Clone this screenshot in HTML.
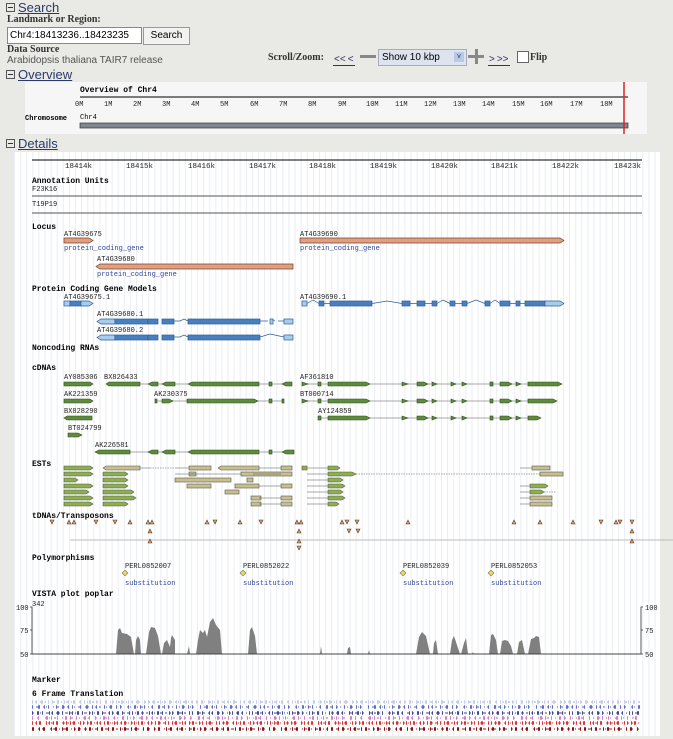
<!DOCTYPE html>
<html><head><meta charset="utf-8"><style>
body{margin:0;width:673px;height:739px;background:#e9e9e5;font-family:"Liberation Sans",sans-serif;position:relative;overflow:hidden}
.a{position:absolute;white-space:nowrap}
.h{font-size:13px;color:#2a3b6a;display:flex;align-items:center}
.h u{text-decoration:underline}
.box{display:inline-block;width:7px;height:7px;border:1px solid #555;margin-right:3px;position:relative;flex:none}
.box:after{content:"";position:absolute;left:1px;top:3px;width:5px;height:1px;background:#333}
.s{font-size:10px;color:#333}
.b{font-size:10px;color:#333;font-weight:bold;font-family:"Liberation Serif",serif}
.ar{display:inline-block;border-bottom:1px solid #336;font-size:10px;color:#336;padding:0 1px;line-height:11px}
</style></head><body>
<div class="a h" style="left:6px;top:0px"><span class="box"></span><u>Search</u></div>
<div class="a b" style="left:7px;top:14px">Landmark or Region:</div>
<div class="a" style="left:7px;top:27px;width:131px;height:15px;background:#fff;border:1px solid #888;font-size:10px;line-height:15px;padding-left:2px">Chr4:18413236..18423235</div>
<div class="a" style="left:143px;top:27px;width:45px;height:16px;background:#f2f2f0;border:1px solid #999;font-size:10px;line-height:16px;text-align:center">Search</div>
<div class="a b" style="left:7px;top:44px">Data Source</div>
<div class="a s" style="left:7px;top:55px;color:#555">Arabidopsis thaliana TAIR7 release</div>
<div class="a b" style="left:268px;top:52px">Scroll/Zoom:</div>
<div class="a" style="left:333px;top:49px"><span class="ar">&lt;&lt;</span><span class="ar">&lt;</span></div>
<div class="a" style="left:360px;top:55px;width:16px;height:3px;background:#888"></div>
<div class="a" style="left:378px;top:49px;width:84px;height:15px;background:#dde4ee;border:1px solid #aab;font-size:10px;line-height:15px;padding-left:3px">Show 10 kbp<span style="position:absolute;right:2px;top:2px;width:10px;height:10px;background:#b8c8e8;font-size:7px;line-height:10px;text-align:center;color:#335">v</span></div>
<div class="a" style="left:468px;top:55px;width:16px;height:3px;background:#888"></div><div class="a" style="left:475px;top:49px;width:3px;height:15px;background:#888"></div>
<div class="a" style="left:488px;top:49px"><span class="ar">&gt;</span><span class="ar">&gt;&gt;</span></div>
<div class="a" style="left:517px;top:51px;width:10px;height:10px;border:1px solid #666;background:#fff"></div>
<div class="a b" style="left:530px;top:52px">Flip</div>
<div class="a h" style="left:6px;top:67px"><span class="box"></span><u>Overview</u></div>
<div class="a h" style="left:6px;top:136px"><span class="box"></span><u>Details</u></div>

<svg class="a" style="left:0;top:0" width="673" height="739" font-family="Liberation Mono,monospace">
<defs>
<pattern id="g" x="14" y="0" width="6.1" height="10" patternUnits="userSpaceOnUse"><rect width="6.1" height="10" fill="#fff"/><rect width="1" height="10" fill="#eaeef4"/></pattern>
</defs>
<rect x="25" y="82" width="622" height="52" fill="#f6f6f6"/>
<text x="80" y="92" font-size="8" font-weight="bold">Overview of Chr4</text>
<line x1="80" y1="97" x2="628" y2="97" stroke="#000"/>
<g font-size="7" fill="#222">
<text x="75" y="106">0M</text><text x="104" y="106">1M</text><text x="133" y="106">2M</text><text x="162" y="106">3M</text><text x="191" y="106">4M</text><text x="220" y="106">5M</text><text x="250" y="106">6M</text><text x="279" y="106">7M</text><text x="308" y="106">8M</text><text x="338" y="106">9M</text><text x="366" y="106">10M</text><text x="395" y="106">11M</text><text x="424" y="106">12M</text><text x="453" y="106">13M</text><text x="482" y="106">14M</text><text x="512" y="106">15M</text><text x="540" y="106">16M</text><text x="570" y="106">17M</text><text x="600" y="106">18M</text></g>
<text x="25" y="120" font-size="7" font-weight="bold">Chromosome</text><text x="80" y="119" font-size="7">Chr4</text>
<rect x="80" y="123" width="548" height="5" fill="#7f8690" stroke="#333" stroke-width=".7"/>
<line x1="624" y1="82" x2="624" y2="134" stroke="#d22" stroke-width="1.5"/>
<rect x="14" y="152" width="646" height="584" fill="url(#g)"/>
<line x1="32" y1="160" x2="642" y2="160" stroke="#000"/>
<g font-size="7.5" fill="#222"><text x="65" y="168">18414k</text><text x="126" y="168">18415k</text><text x="188" y="168">18416k</text><text x="249" y="168">18417k</text><text x="309" y="168">18418k</text><text x="370" y="168">18419k</text><text x="431" y="168">18420k</text><text x="491" y="168">18421k</text><text x="552" y="168">18422k</text><text x="614" y="168">18423k</text></g>
<g font-size="8" font-weight="bold">
<text x="32" y="183">Annotation Units</text><text x="32" y="229">Locus</text><text x="32" y="291">Protein Coding Gene Models</text><text x="32" y="350">Noncoding RNAs</text><text x="32" y="370">cDNAs</text><text x="32" y="466">ESTs</text><text x="32" y="518">tDNAs/Transposons</text><text x="32" y="560">Polymorphisms</text><text x="32" y="596">VISTA plot poplar</text><text x="32" y="682">Marker</text><text x="32" y="696">6 Frame Translation</text></g>
<g font-size="7" fill="#222">
<text x="32" y="191">F23K16</text><line x1="32" y1="196" x2="642" y2="196" stroke="#555"/>
<text x="32" y="206">T19P19</text><line x1="32" y1="213" x2="642" y2="213" stroke="#555"/>
<text x="64" y="236">AT4G39675</text><text x="97" y="261">AT4G39680</text><text x="300" y="236">AT4G39690</text>
<text x="64" y="299">AT4G39675.1</text><text x="97" y="316">AT4G39680.1</text><text x="97" y="332">AT4G39680.2</text><text x="300" y="299">AT4G39690.1</text>
<text x="64" y="379">AY085306</text><text x="104" y="379">BX826433</text><text x="300" y="379">AF361810</text>
<text x="64" y="396">AK221359</text><text x="154" y="396">AK230375</text><text x="300" y="396">BT000714</text>
<text x="64" y="413">BX828290</text><text x="318" y="413">AY124859</text><text x="68" y="430">BT024799</text><text x="95" y="447">AK226581</text>
<text x="125" y="568">PERL0852007</text><text x="243" y="568">PERL0852022</text><text x="403" y="568">PERL0852039</text><text x="491" y="568">PERL0852053</text>
<text x="32" y="606">342</text><text x="16" y="610">100</text><text x="20" y="633">75</text><text x="20" y="657">50</text><text x="645" y="610">100</text><text x="645" y="633">75</text><text x="645" y="657">50</text>
</g>
<g font-size="7" fill="#33479a"><text x="64" y="250">protein_coding_gene</text><text x="97" y="276">protein_coding_gene</text><text x="300" y="250">protein_coding_gene</text>
<text x="125" y="585">substitution</text><text x="243" y="585">substitution</text><text x="403" y="585">substitution</text><text x="491" y="585">substitution</text></g>
<g fill="#e0a080" stroke="#7a4030" stroke-width=".7"><path d="M64 238H89L93 240.5L89 243H64Z"/><path d="M100 264H293V269H100L96 266.5Z"/><path d="M300 238H560L564 240.5L560 243H300Z"/></g>
<g stroke="#2e5e99" stroke-width=".7">
<rect x="64" y="301" width="6" height="5" fill="#a8ccec"/><rect x="70" y="301" width="11" height="5" fill="#4a7fbf"/><path d="M81 301H89L93 303.5L89 306H81Z" fill="#a8ccec"/>
<g fill="none"><path d="M180 321L184 319L188 321M174 321H180M188 321H204M260 321H268M270 321L272 319L275 321M278 321H284"/><path d="M180 337L184 335L188 337M174 337H180M188 337H204M260 337L270 334L284 337"/></g>
<path d="M101 319H115V324H101L97 321.5Z" fill="#a8ccec"/><rect x="115" y="319" width="33" height="5" fill="#4a7fbf"/><rect x="148" y="319" width="10" height="5" fill="#4a7fbf"/><rect x="162" y="319" width="12" height="5" fill="#4a7fbf"/><rect x="188" y="319" width="72" height="5" fill="#4a7fbf"/><rect x="270" y="319" width="3" height="5" fill="#a8ccec"/><rect x="284" y="319" width="9" height="5" fill="#a8ccec"/>
<path d="M101 335H115V340H101L97 337.5Z" fill="#a8ccec"/><rect x="115" y="335" width="33" height="5" fill="#4a7fbf"/><rect x="148" y="335" width="10" height="5" fill="#4a7fbf"/><rect x="162" y="335" width="12" height="5" fill="#4a7fbf"/><rect x="188" y="335" width="72" height="5" fill="#4a7fbf"/><rect x="284" y="335" width="9" height="5" fill="#a8ccec"/>
<path d="M307 303.5L313 300L319 303.5M324 303.5H330M372 303.5L387 301L402 303.5M410 303.5H417M425 303.5H432M437 303.5L443 300L450 303.5M455 303.5H462M467 303.5L476 300L485 303.5M490 303.5L495 300L500 303.5M510 303.5H516M520 303.5H525" fill="none"/>
<rect x="302" y="301" width="5" height="5" fill="#a8ccec"/><g fill="#4a7fbf"><rect x="319" y="301" width="5" height="5"/><rect x="330" y="301" width="42" height="5"/><rect x="402" y="301" width="8" height="5"/><rect x="417" y="301" width="8" height="5"/><rect x="432" y="301" width="5" height="5"/><rect x="450" y="301" width="5" height="5"/><rect x="462" y="301" width="5" height="5"/><rect x="485" y="301" width="5" height="5"/><rect x="500" y="301" width="10" height="5"/><rect x="516" y="301" width="4" height="5"/><rect x="525" y="301" width="20" height="5"/></g><path d="M545 301H560L564 303.5L560 306H545Z" fill="#a8ccec"/>
</g>
<g fill="#5e8c3c" stroke="#2e4e1e" stroke-width=".6">
<g stroke="#555" fill="none"><path d="M140 384H292M302 384H562M155 401H283M302 401H555M318 418H540M95 452H294"/></g>
<path d="M64 382H90L93 384L90 386H64Z"/><path d="M109 382H140V386H109L106 384Z"/><path d="M152 382H158V386H152L148 384Z"/><path d="M166 382H175V386H166L162 384Z"/><path d="M192 382H259V386H192L188 384Z"/><rect x="269" y="382" width="3" height="4"/><path d="M286 382H292V386H286L282 384Z"/>
<path d="M302 382L308 384L302 386Z"/><rect x="318" y="382" width="3" height="4"/><path d="M328 382H366L370 384L366 386H328Z"/><path d="M402 382L408 384L402 386Z"/><path d="M417 382H424L428 384L424 386H417Z"/><path d="M432 382L437 384L432 386Z"/><path d="M451 382L456 384L451 386Z"/><path d="M462 382L467 384L462 386Z"/><rect x="490" y="382" width="3" height="4"/><path d="M500 382H508L512 384L508 386H500Z"/><path d="M516 382L521 384L516 386Z"/><path d="M528 382H558L562 384L558 386H528Z"/>
<path d="M64 399H90L93 401L90 403H64Z"/><rect x="155" y="399" width="2" height="4"/><path d="M162 399H169L173 401L169 403H162Z"/><path d="M187 399H254L258 401L254 403H187Z"/><rect x="269" y="399" width="3" height="4"/><rect x="282" y="399" width="2" height="4"/>
<path d="M302 399L308 401L302 403Z"/><rect x="318" y="399" width="3" height="4"/><path d="M328 399H366L370 401L366 403H328Z"/><path d="M402 399L408 401L402 403Z"/><path d="M417 399H424L428 401L424 403H417Z"/><path d="M432 399L437 401L432 403Z"/><path d="M451 399L456 401L451 403Z"/><path d="M462 399L467 401L462 403Z"/><rect x="490" y="399" width="3" height="4"/><path d="M500 399H508L512 401L508 403H500Z"/><path d="M516 399L521 401L516 403Z"/><path d="M528 399H553L557 401L553 403H528Z"/>
<path d="M67 416H92V420H67L64 418Z"/><rect x="318" y="416" width="3" height="4"/><path d="M328 416H366L370 418L366 420H328Z"/><path d="M402 416L408 418L402 420Z"/><path d="M417 416H424L428 418L424 420H417Z"/><path d="M432 416L437 418L432 420Z"/><path d="M451 416L456 418L451 420Z"/><path d="M462 416L467 418L462 420Z"/><rect x="490" y="416" width="3" height="4"/><path d="M500 416H508L512 418L508 420H500Z"/><path d="M516 416L521 418L516 420Z"/><path d="M528 416H537L541 418L537 420H528Z"/>
<path d="M68 433H78L82 435L78 437H68Z"/>
<path d="M99 450H130V454H99L95 452Z"/><path d="M152 450H158V454H152L148 452Z"/><path d="M166 450H175V454H166L162 452Z"/><path d="M192 450H259V454H192L188 452Z"/><rect x="269" y="450" width="3" height="4"/><path d="M286 450H294V454H286L282 452Z"/>
</g>
<g stroke="#555" stroke-width=".6" fill="#8cb04c">
<path d="M64 466H90L93 468L90 470H64Z"/><path d="M64 472H90L93 474L90 476H64Z"/><path d="M64 478H75L78 480L75 482H64Z"/><path d="M64 484H90L93 486L90 488H64Z"/><path d="M64 490H86L89 492L86 494H64Z"/><path d="M64 496H90L93 498L90 500H64Z"/><path d="M64 502H90L93 504L90 506H64Z"/>
<path d="M106 466H140V470H106L103 468Z" fill="#c8c08c"/><path d="M103 472H125L128 474L125 476H103Z"/><path d="M103 478H125L128 480L125 482H103Z"/><path d="M103 484H125L128 486L125 488H103Z"/><path d="M103 490H131L134 492L131 494H103Z"/><path d="M103 496H133L136 498L133 500H103Z"/><path d="M103 502H125L128 504L125 506H103Z"/>
<g fill="#c8c08c"><rect x="189" y="466" width="22" height="4"/><path d="M221 466H259V470H221L218 468Z"/><rect x="281" y="466" width="11" height="4"/><rect x="189" y="472" width="7" height="4"/><rect x="241" y="472" width="51" height="4"/><rect x="175" y="478" width="56" height="4"/><rect x="247" y="478" width="6" height="4"/><rect x="187" y="484" width="24" height="4"/><rect x="235" y="484" width="24" height="4"/><rect x="281" y="484" width="11" height="4"/><rect x="225" y="490" width="14" height="4"/><rect x="251" y="496" width="10" height="4"/><rect x="281" y="496" width="11" height="4"/><rect x="251" y="502" width="10" height="4"/><rect x="281" y="502" width="11" height="4"/>
<rect x="532" y="466" width="18" height="4"/><rect x="540" y="472" width="23" height="4"/><rect x="530" y="496" width="22" height="4"/><rect x="530" y="502" width="22" height="4"/></g>
<g><path d="M302 466H307V470H302Z"/><path d="M328 466H337L340 468L337 470H328Z"/><path d="M328 472H352L356 474L352 476H328Z"/><path d="M328 478H340L343 480L340 482H328Z"/><path d="M328 484H342L345 486L342 488H328Z"/><path d="M328 490H340L343 492L340 494H328Z"/><path d="M328 496H342L345 498L342 500H328Z"/><path d="M328 502H336L339 504L336 506H328Z"/><path d="M530 484H545L548 486L545 488H530Z"/><path d="M530 490H541L544 492L541 494H530Z"/></g>
<g fill="none"><path d="M140 468H150M175 468H189M259 468H281M175 474H241M253 474H281M259 486H281M259 498H281M259 504H281M307 468H328M307 474H328M307 480H328M307 486H328M307 492H328M307 498H328M307 504H328M520 468H532M520 486H530M520 492H530M520 498H530M520 504H530"/><path d="M150 468H175M356 474H540M544 492H556" stroke-dasharray="1.5 1"/></g>
</g>
<line x1="70" y1="540" x2="673" y2="540" stroke="#bbb"/>
<g fill="#d4a070" stroke="#5a3a20" stroke-width=".6">
<path d="M50 520h4l-2 4z"/><path d="M67 524h4l-2-4z"/><path d="M72 524h4l-2-4z"/><path d="M94 520h4l-2 4z"/><path d="M113 520h4l-2 4z"/><path d="M128 524h4l-2-4z"/><path d="M146 524h4l-2-4z"/><path d="M150 524h4l-2-4z"/><path d="M148 533h4l-2-4z"/><path d="M148 543h4l-2-4z"/>
<path d="M205 524h4l-2-4z"/><path d="M213 520h4l-2 4z"/><path d="M238 524h4l-2-4z"/><path d="M259 520h4l-2 4z"/><path d="M295 524h4l-2-4z"/><path d="M299 524h4l-2-4z"/><path d="M297 533h4l-2-4z"/><path d="M297 543h4l-2-4z"/><path d="M297 546h4l-2 4z"/>
<path d="M340 524h4l-2-4z"/><path d="M345 520h4l-2 4z"/><path d="M355 520h4l-2 4z"/><path d="M347 529h4l-2 4z"/><path d="M356 529h4l-2 4z"/><path d="M406 524h4l-2-4z"/><path d="M512 524h4l-2-4z"/><path d="M538 524h4l-2-4z"/><path d="M571 524h4l-2-4z"/><path d="M599 520h4l-2 4z"/><path d="M614 524h4l-2-4z"/><path d="M618 520h4l-2 4z"/><path d="M630 520h4l-2 4z"/><path d="M630 533h4l-2-4z"/><path d="M630 543h4l-2-4z"/></g>
<g fill="#e8d860" stroke="#776" stroke-width=".6"><path d="M125 570l3 3-3 3-3-3z"/><path d="M243 570l3 3-3 3-3-3z"/><path d="M403 570l3 3-3 3-3-3z"/><path d="M491 570l3 3-3 3-3-3z"/></g>
<g stroke="#333" stroke-width=".8" fill="none"><path d="M30 607H32V654H30M30 630H32M643 607H641V654H643M643 630H641"/></g>
<path fill="#808080" d="M116 654L118 630L120 628L122 633L127 634L131 637L134 654L135 654L136 640L138 636L140 640L141 654L146 654L149 632L151 627L155 628L158 636L161 654L162 654L164 643L167 640L170 647L171 638L172 635L175 640L175 654L187 654L189 646L190 654L196 654L198 640L200 630L203 633L205 630L207 637L210 622L213 618L216 625L220 630L222 654L248 654L250 630L252 627L255 636L257 654L320 654L321 646L322 654L347 654L348 648L350 647L351 654L368 654L369 650L370 654L416 654L419 637L422 632L426 636L430 654L433 654L434 643L436 640L438 654L450 654L452 640L454 636L457 645L460 654L461 654L464 643L466 638L468 654L472 654L473 652L474 654L489 654L491 635L493 634L496 640L498 654L500 654L502 641L505 640L508 641L511 646L513 654L517 654L519 642L522 640L525 654L528 654L531 639L534 638L536 636L539 637L541 654Z"/>
<line x1="32" y1="654" x2="641" y2="654" stroke="#444"/>
<g stroke-width="1"><path d="M32 702H640" stroke="#9aa8d8" stroke-dasharray="1 2 1 4 2 3"/><path d="M32 707H640" stroke="#5060b0" stroke-dasharray="1 3 2 5 1 2 1 6"/><path d="M32 713H640" stroke="#404898" stroke-dasharray="2 3 1 2 1 5 3 2"/><path d="M32 718H640" stroke="#c060b0" stroke-dasharray="1 4 2 6 1 3"/><path d="M32 723H640" stroke="#e03030" stroke-dasharray="1 2 2 3 1 5 1 1"/><path d="M32 729H640" stroke="#a01818" stroke-dasharray="2 4 1 3 3 5 1 2"/></g>
<g stroke-width="3.5"><path d="M32 702H640" stroke="#c8cce8" stroke-dasharray="1 3 1 4 2 5"/><path d="M32 707H640" stroke="#6070c0" stroke-dasharray="1 5 2 4 1 3 1 7"/><path d="M32 713H640" stroke="#404898" stroke-dasharray="1 4 2 3 1 6 1 2"/><path d="M32 718H640" stroke="#d080c8" stroke-dasharray="1 5 1 7 2 3"/><path d="M32 723H640" stroke="#e03030" stroke-dasharray="1 3 1 2 2 5 1 2"/><path d="M32 729H640" stroke="#901010" stroke-dasharray="2 5 1 3 2 6 1 3"/></g>
</svg>
</body></html>
